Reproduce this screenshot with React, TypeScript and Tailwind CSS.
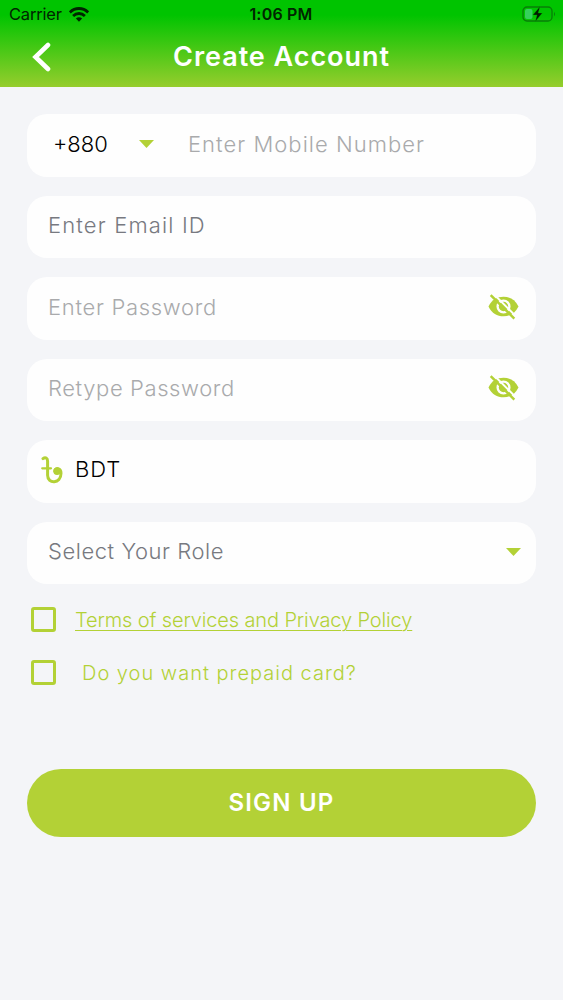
import { useState } from 'react';

const field = 'flex items-center w-full h-[62.5px] rounded-[20px] bg-[#fefefe]';
const input = 'min-w-0 bg-transparent outline-none font-light text-[22px]';

function WifiIcon() {
  return (
    <svg className="w-5 h-[15px]" viewBox="0 0 20 15" fill="none" stroke="#002500" strokeWidth="2.8">
      <path d="M0.8 5.4C6 .2 14 .2 19.2 5.4" />
      <path d="M4.1 8.9C7.5 5.7 12.5 5.7 15.9 8.9" />
      <path d="M6.9 11.4C8.7 9.9 11.3 9.9 13.1 11.4L10 14.7Z" fill="#002500" stroke="none" />
    </svg>
  );
}

function BatteryIcon() {
  return (
    <svg className="w-[35px] h-4" viewBox="0 0 35 16">
      <rect x="1" y="1" width="29" height="14" rx="4" fill="none" stroke="#087d08" strokeWidth="1.3" />
      <rect x="3" y="3" width="7.5" height="10" rx="2" fill="#35d05c" />
      <path d="M32 5.7Q34 8 32 10.3Z" fill="#087d08" />
      <path d="M18 0.6L10.8 9H15L13.3 15.4L20.3 7H16.2Z" fill="#001b00" stroke="#0bbd08" strokeWidth="0.3" />
    </svg>
  );
}

function EyeOffIcon() {
  return (
    <svg className="w-[31px] h-[27px]" viewBox="0 0 31 27">
      <path d="M0.5 13.5C4 6.5 9 3.7 15.5 3.7S27 6.5 30.5 13.5C27 20.5 22 23.3 15.5 23.3S4 20.5 .5 13.5Z" fill="#b3d136" />
      <circle cx="15.5" cy="13.5" r="5.9" fill="none" stroke="#fefefe" strokeWidth="2.3" />
      <path d="M5 0.3L29.2 24.5" stroke="#fefefe" strokeWidth="2" />
      <path d="M2.7 2.2L26.3 25.6" stroke="#b3d136" strokeWidth="2.5" />
    </svg>
  );
}

function TakaIcon() {
  return (
    <svg className="w-[22px] h-7" viewBox="0 0 22 28" fill="none" stroke="#b3d136" strokeWidth="3" strokeLinecap="round">
      <path d="M2 2.6C4.5 .6 6.6 2 6.6 5.3V19.3C6.6 28.3 20 28 20 17.3C20 12 14.2 11 13.9 15" />
      <path d="M1.2 12.3H10" strokeWidth="2.2" />
      <circle cx="16" cy="15.2" r="3.7" fill="#b3d136" stroke="none" />
    </svg>
  );
}

function Caret() {
  return (
    <svg className="w-[15px] h-2 shrink-0" viewBox="0 0 15 8">
      <path d="M0 0H15L7.5 8Z" fill="#b3d136" />
    </svg>
  );
}

function PasswordField({ placeholder, tracking }: { placeholder: string; tracking: string }) {
  const [visible, setVisible] = useState(false);

  return (
    <div className={`${field} pl-[21px] pr-[17px]`}>
      <input
        type={visible ? 'text' : 'password'}
        placeholder={placeholder}
        className={`${input} ${tracking} flex-1 pb-0.5 placeholder:text-[#a9aaac]`}
      />
      <button type="button" aria-label="Toggle password" onClick={() => setVisible(!visible)} className="pb-1">
        <EyeOffIcon />
      </button>
    </div>
  );
}

function Checkbox({ label }: { label: string }) {
  const [checked, setChecked] = useState(false);

  return (
    <button
      type="button"
      role="checkbox"
      aria-checked={checked}
      aria-label={label}
      onClick={() => setChecked(!checked)}
      className={`w-[25px] h-[25px] mb-0.5 shrink-0 rounded-[3px] border-3 border-[#b3d136] ${checked ? 'bg-[#b3d136]' : ''}`}
    />
  );
}

export default function App() {
  return (
    <div className="w-full h-[1000px] bg-[#f4f5f8] font-['Inter','Liberation_Sans',sans-serif] overflow-hidden">
      <header className="h-[87px] bg-[linear-gradient(to_bottom,#00c400_0px,#00c400_15px,#96cd2d_87px)]">
        <div className="grid grid-cols-3 items-center h-7 pl-[9px] pr-[6px] text-[16.5px] text-[#002500]">
          <div className="flex items-center gap-[7px]">
            <span className="tracking-[-0.2px]">Carrier</span>
            <WifiIcon />
          </div>
          <span className="text-center font-semibold text-[16px] tracking-[0.2px] -ml-1">1:06 PM</span>
          <div className="flex justify-end">
            <BatteryIcon />
          </div>
        </div>
        <div className="grid grid-cols-[60px_1fr_60px] items-center h-[57px]">
          <button type="button" aria-label="Back" className="pl-8">
            <svg className="w-[20px] h-[30px]" viewBox="0 0 20 30" fill="none" stroke="#fff" strokeWidth="4.6" strokeLinecap="round">
              <path d="M16 3L3.5 15L16 27" />
            </svg>
          </button>
          <h1 className="pt-0.5 text-center text-[27px] font-semibold text-white tracking-[0.95px]">Create Account</h1>
        </div>
      </header>

      <form className="px-[27px] pt-[27px]" onSubmit={(e) => e.preventDefault()}>
        <div className="flex flex-col gap-[19px]">
          <div className={`${field} pl-[26px]`}>
            <button type="button" className="flex items-center justify-between w-[101px] mr-[34px] pb-0.5 text-[22px] font-light text-black">
              <span>+880</span>
              <Caret />
            </button>
            <input type="tel" placeholder="Enter Mobile Number" className={`${input} flex-1 pb-0.5 tracking-[1.03px] placeholder:text-[#a9aaac]`} />
          </div>
          <div className={`${field} px-[21px]`}>
            <input type="email" placeholder="Enter Email ID" className={`${input} flex-1 pb-0.5 tracking-[1.15px] placeholder:text-[#777980]`} />
          </div>
          <PasswordField placeholder="Enter Password" tracking="tracking-[0.7px]" />
          <PasswordField placeholder="Retype Password" tracking="tracking-[0.6px]" />
          <div className={`${field} pl-[14px] gap-3 pb-[3px]`}>
            <TakaIcon />
            <span className="text-[22px] font-light text-black tracking-[1px]">BDT</span>
          </div>
          <button type="button" className={`${field} justify-between pl-[21px] pr-[15px] pb-0.5`}>
            <span className="font-light text-[22px] tracking-[0.55px] text-[#777980]">Select Your Role</span>
            <Caret />
          </button>
        </div>

        <div className="flex items-center h-7 mt-[22px] pl-1 gap-[19px]">
          <Checkbox label="Terms of services and Privacy Policy" />
          <a href="#" className="text-[20px] font-light tracking-[-0.13px] text-[#b3d136] underline decoration-1 underline-offset-[3px]">
            Terms of services and Privacy Policy
          </a>
        </div>
        <div className="flex items-center h-7 mt-[25px] pl-1 gap-[26px]">
          <Checkbox label="Do you want prepaid card?" />
          <span className="text-[20px] font-light tracking-[1px] text-[#b3d136]">Do you want prepaid card?</span>
        </div>

        <button type="submit" className="w-full h-[68px] mt-[82px] rounded-[34px] bg-[#b3d136] text-[24px] font-semibold tracking-[1.2px] text-white">
          SIGN UP
        </button>
      </form>
    </div>
  );
}
